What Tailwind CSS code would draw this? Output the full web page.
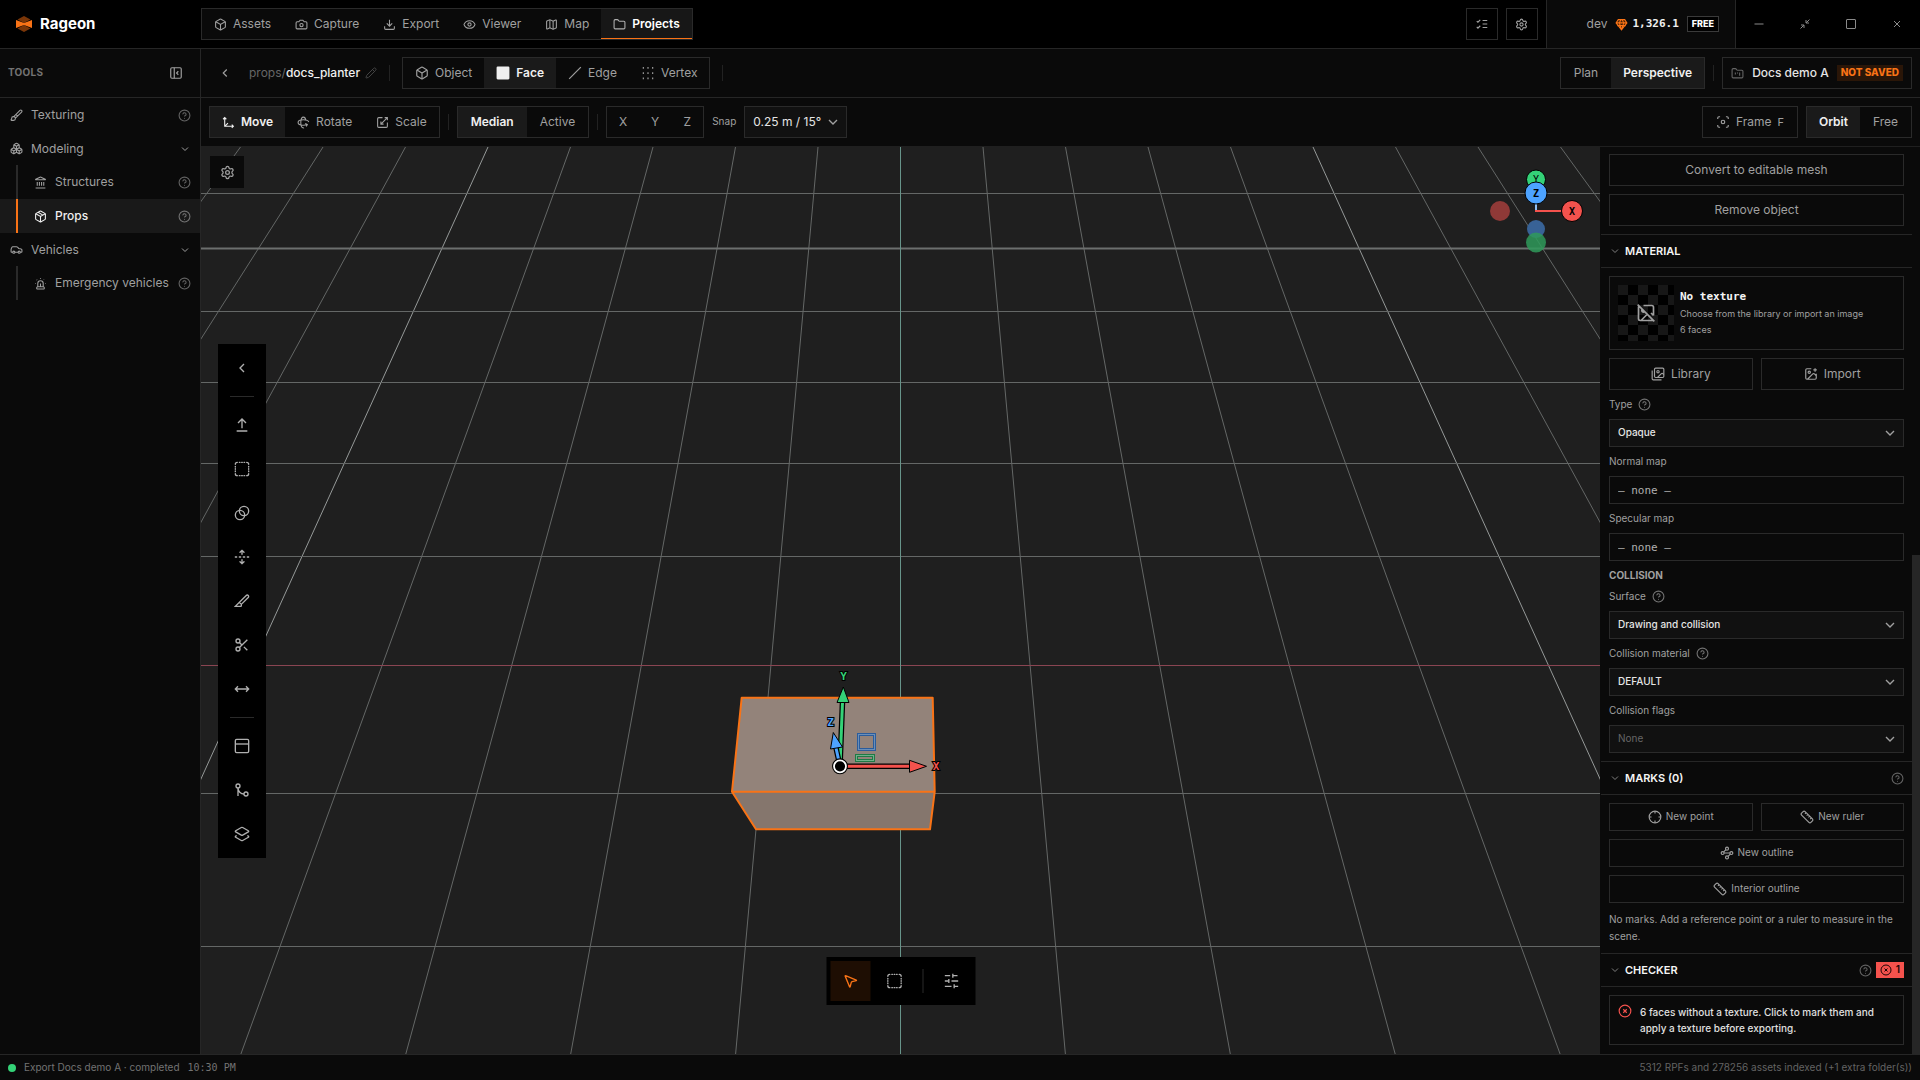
<!DOCTYPE html>
<html lang="en">
<head>
  <meta charset="UTF-8"/>
  <meta name="viewport" content="width=device-width, initial-scale=1"/>
  <title>Rageon — docs_planter</title>
  <script src="https://cdn.jsdelivr.net/npm/@tailwindcss/browser@4"></script>
</head>
<body class="h-screen flex flex-col overflow-hidden bg-[#0a0a0a] font-['Inter','Liberation_Sans',sans-serif] text-xs text-[#a0a0a0]">

  <!-- Icon sprite -->
  <svg class="hidden" aria-hidden="true">
    <symbol id="i-box" viewBox="0 0 24 24"><path d="M21 8a2 2 0 0 0-1-1.73l-7-4a2 2 0 0 0-2 0l-7 4A2 2 0 0 0 3 8v8a2 2 0 0 0 1 1.73l7 4a2 2 0 0 0 2 0l7-4A2 2 0 0 0 21 16Z"/><path d="m3.3 7 8.7 5 8.7-5M12 22V12"/></symbol>
    <symbol id="i-package" viewBox="0 0 24 24"><path d="M21 8a2 2 0 0 0-1-1.73l-7-4a2 2 0 0 0-2 0l-7 4A2 2 0 0 0 3 8v8a2 2 0 0 0 1 1.73l7 4a2 2 0 0 0 2 0l7-4A2 2 0 0 0 21 16Z"/><path d="m3.3 7 8.7 5 8.7-5M12 22V12M7.5 4.27l9 5.15"/></symbol>
    <symbol id="i-camera" viewBox="0 0 24 24"><path d="M14.5 4h-5L7 7H4a2 2 0 0 0-2 2v9a2 2 0 0 0 2 2h16a2 2 0 0 0 2-2V9a2 2 0 0 0-2-2h-3z"/><circle cx="12" cy="13" r="3"/></symbol>
    <symbol id="i-download" viewBox="0 0 24 24"><path d="M12 15V3M21 15v4a2 2 0 0 1-2 2H5a2 2 0 0 1-2-2v-4M7 10l5 5 5-5"/></symbol>
    <symbol id="i-eye" viewBox="0 0 24 24"><path d="M2.062 12.348a1 1 0 0 1 0-.696 10.75 10.75 0 0 1 19.876 0 1 1 0 0 1 0 .696 10.75 10.75 0 0 1-19.876 0"/><circle cx="12" cy="12" r="3"/></symbol>
    <symbol id="i-map" viewBox="0 0 24 24"><path d="M14.106 5.553a2 2 0 0 0 1.788 0l3.659-1.83A1 1 0 0 1 21 4.619v12.764a1 1 0 0 1-.553.894l-4.553 2.277a2 2 0 0 1-1.788 0l-4.212-2.106a2 2 0 0 0-1.788 0l-3.659 1.83A1 1 0 0 1 3 19.381V6.618a1 1 0 0 1 .553-.894l4.553-2.277a2 2 0 0 1 1.788 0zM15 5.764v15M9 3.236v15"/></symbol>
    <symbol id="i-folder" viewBox="0 0 24 24"><path d="M20 20a2 2 0 0 0 2-2V8a2 2 0 0 0-2-2h-7.9a2 2 0 0 1-1.69-.9L9.6 3.9A2 2 0 0 0 7.93 3H4a2 2 0 0 0-2 2v13a2 2 0 0 0 2 2Z"/></symbol>
    <symbol id="i-kanban" viewBox="0 0 24 24"><path d="M4 20h16a2 2 0 0 0 2-2V8a2 2 0 0 0-2-2h-7.93a2 2 0 0 1-1.66-.9l-.82-1.2A2 2 0 0 0 7.93 3H4a2 2 0 0 0-2 2v13c0 1.1.9 2 2 2ZM8 10v4M12 10v2M16 10v6"/></symbol>
    <symbol id="i-checks" viewBox="0 0 24 24"><path d="m3 17 2 2 4-4M3 7l2 2 4-4M13 6h8M13 12h8M13 18h8"/></symbol>
    <symbol id="i-settings" viewBox="0 0 24 24"><path d="M9.671 4.136a2.34 2.34 0 0 1 4.659 0 2.34 2.34 0 0 0 3.319 1.915 2.34 2.34 0 0 1 2.33 4.033 2.34 2.34 0 0 0 0 3.831 2.34 2.34 0 0 1-2.33 4.033 2.34 2.34 0 0 0-3.319 1.915 2.34 2.34 0 0 1-4.659 0 2.34 2.34 0 0 0-3.32-1.915 2.34 2.34 0 0 1-2.33-4.033 2.34 2.34 0 0 0 0-3.831A2.34 2.34 0 0 1 6.35 6.051a2.34 2.34 0 0 0 3.319-1.915"/><circle cx="12" cy="12" r="3"/></symbol>
    <symbol id="i-minus" viewBox="0 0 24 24"><path d="M3 12h18"/></symbol>
    <symbol id="i-shrink" viewBox="0 0 24 24"><path d="m14 10 7-7M20 10h-6V4M3 21l7-7M4 14h6v6"/></symbol>
    <symbol id="i-square" viewBox="0 0 24 24"><rect x="3" y="3" width="18" height="18" rx="1"/></symbol>
    <symbol id="i-x" viewBox="0 0 24 24"><path d="M18 6 6 18M6 6l12 12"/></symbol>
    <symbol id="i-panel-close" viewBox="0 0 24 24"><rect x="3" y="3" width="18" height="18" rx="2"/><path d="M9 3v18M16 15l-3-3 3-3"/></symbol>
    <symbol id="i-left" viewBox="0 0 24 24"><path d="m15 18-6-6 6-6"/></symbol>
    <symbol id="i-down" viewBox="0 0 24 24"><path d="m6 9 6 6 6-6"/></symbol>
    <symbol id="i-pencil" viewBox="0 0 24 24"><path d="M21.174 6.812a1 1 0 0 0-3.986-3.987L3.842 16.174a2 2 0 0 0-.5.83l-1.321 4.352a.5.5 0 0 0 .623.622l4.353-1.32a2 2 0 0 0 .83-.497zM15 5l4 4"/></symbol>
    <symbol id="i-face" viewBox="0 0 24 24"><rect x="1" y="1" width="22" height="22" rx="2" fill="currentColor" stroke="none"/></symbol>
    <symbol id="i-edge" viewBox="0 0 24 24"><path d="M22 2 2 22"/></symbol>
    <symbol id="i-dots" viewBox="0 0 24 24"><path d="M3 3h2M11 3h2M19 3h2M3 12h2M11 12h2M19 12h2M3 21h2M11 21h2M19 21h2" stroke-width="3"/></symbol>
    <symbol id="i-move3d" viewBox="0 0 24 24"><path d="M5 3v16h16M5 19l6-6M2 6l3-3 3 3M18 16l3 3-3 3"/></symbol>
    <symbol id="i-rotate3d" viewBox="0 0 24 24"><path d="M16.466 7.5C15.643 4.237 13.952 2 12 2 9.239 2 7 6.477 7 12s2.239 10 5 10c.342 0 .677-.069 1-.2M15.194 13.707l3.814 1.86-1.86 3.814M19 15.57c-1.804.885-4.274 1.43-7 1.43-5.523 0-10-2.239-10-5s4.477-5 10-5c4.838 0 8.873 1.718 9.8 4"/></symbol>
    <symbol id="i-scaling" viewBox="0 0 24 24"><path d="M12 3H5a2 2 0 0 0-2 2v14a2 2 0 0 0 2 2h14a2 2 0 0 0 2-2v-7M14 15H9v-5M16 3h5v5M21 3 9 15"/></symbol>
    <symbol id="i-focus" viewBox="0 0 24 24"><circle cx="12" cy="12" r="3"/><path d="M3 7V5a2 2 0 0 1 2-2h2M17 3h2a2 2 0 0 1 2 2v2M21 17v2a2 2 0 0 1-2 2h-2M7 21H5a2 2 0 0 1-2-2v-2"/></symbol>
    <symbol id="i-brush" viewBox="0 0 24 24"><path d="m11 10 3 3M6.5 21A3.5 3.5 0 1 0 3 17.5a2.62 2.62 0 0 1-.708 1.792A1 1 0 0 0 3 21zM9.969 17.031 21.378 5.624a1 1 0 0 0-3.002-3.002L6.967 14.031"/></symbol>
    <symbol id="i-boxes" viewBox="0 0 24 24"><path d="M2.97 12.92A2 2 0 0 0 2 14.63v3.24a2 2 0 0 0 .97 1.71l3 1.8a2 2 0 0 0 2.06 0L12 19v-5.5l-5-3-4.03 2.42ZM7 16.5l-4.74-2.85M7 16.5l5-3M7 16.5v5.17M12 13.5V19l3.97 2.38a2 2 0 0 0 2.06 0l3-1.8a2 2 0 0 0 .97-1.71v-3.24a2 2 0 0 0-.97-1.71L17 10.5l-5 3ZM17 16.5l-5-3M17 16.5l4.74-2.85M17 16.5v5.17M7.97 4.42A2 2 0 0 0 7 6.13v4.37l5 3 5-3V6.13a2 2 0 0 0-.97-1.71l-3-1.8a2 2 0 0 0-2.06 0l-3 1.8ZM12 8 7.26 5.15M12 8l4.74-2.85M12 13.5V8"/></symbol>
    <symbol id="i-landmark" viewBox="0 0 24 24"><path d="M10 18v-7M11.12 2.198a2 2 0 0 1 1.76.006l7.866 3.847c.476.233.31.949-.22.949H3.474c-.53 0-.695-.716-.22-.949zM14 18v-7M18 18v-7M3 22h18M6 18v-7"/></symbol>
    <symbol id="i-car" viewBox="0 0 24 24"><path d="M19 17h2c.6 0 1-.4 1-1v-3c0-.9-.7-1.7-1.5-1.9C18.7 10.6 16 10 16 10s-1.3-1.4-2.2-2.3c-.5-.4-1.1-.7-1.8-.7H5c-.6 0-1.1.4-1.4.9l-1.4 2.9A3.7 3.7 0 0 0 2 12v4c0 .6.4 1 1 1h2M9 17h6"/><circle cx="7" cy="17" r="2"/><circle cx="17" cy="17" r="2"/></symbol>
    <symbol id="i-siren" viewBox="0 0 24 24"><path d="M7 18v-6a5 5 0 1 1 10 0v6M5 21a1 1 0 0 0 1 1h12a1 1 0 0 0 1-1v-1a2 2 0 0 0-2-2H7a2 2 0 0 0-2 2zM21 12h1M18.5 4.5 18 5M2 12h1M12 2v1M4.929 4.929l.707.707M12 12v6"/></symbol>
    <symbol id="i-help" viewBox="0 0 24 24"><circle cx="12" cy="12" r="10"/><path d="M9.09 9a3 3 0 0 1 5.83 1c0 2-3 3-3 3M12 17h.01" stroke-linecap="round"/></symbol>
    <symbol id="i-extrude" viewBox="0 0 24 24"><path d="m18 9-6-6-6 6M12 3v14M4 21h16"/></symbol>
    <symbol id="i-select" viewBox="0 0 24 24"><path d="M5 2a3 3 0 0 0-3 3M19 2a3 3 0 0 1 3 3M22 19a3 3 0 0 1-3 3M5 22a3 3 0 0 1-3-3M8 2h1M8 22h1M11.5 2h1M11.5 22h1M15 2h1M15 22h1M2 8v1M22 8v1M2 11.5v1M22 11.5v1M2 15v1M22 15v1" stroke-linecap="round"/></symbol>
    <symbol id="i-blend" viewBox="0 0 24 24"><circle cx="9" cy="15" r="7"/><circle cx="15" cy="9" r="7"/></symbol>
    <symbol id="i-unfold" viewBox="0 0 24 24"><path d="M12 22v-6M12 8V2M4 12H2M10 12H8M16 12h-2M22 12h-2M15 19l-3 3-3-3M15 5l-3-3-3 3" stroke-linecap="round"/></symbol>
    <symbol id="i-slice" viewBox="0 0 24 24"><path d="M11 16.586V19a1 1 0 0 1-1 1H2L18.37 3.63a1 1 0 1 1 3 3l-9.663 9.663a1 1 0 0 1-1.414 0L8 14"/></symbol>
    <symbol id="i-scissors" viewBox="0 0 24 24"><circle cx="6" cy="6" r="3"/><path d="M8.12 8.12 12 12M20 4 8.12 15.88M14.8 14.8 20 20"/><circle cx="6" cy="18" r="3"/></symbol>
    <symbol id="i-horizontal" viewBox="0 0 24 24"><path d="m18 8 4 4-4 4M2 12h20M6 8l-4 4 4 4"/></symbol>
    <symbol id="i-panel-top" viewBox="0 0 24 24"><rect x="2" y="2" width="20" height="20" rx="2"/><path d="M2 9h20"/></symbol>
    <symbol id="i-merge" viewBox="0 0 24 24"><circle cx="18" cy="18" r="3"/><circle cx="6" cy="6" r="3"/><path d="M6 21V9a9 9 0 0 0 9 9"/></symbol>
    <symbol id="i-layers" viewBox="0 0 24 24"><path d="M13 13.74a2 2 0 0 1-2 0L2.5 8.87a1 1 0 0 1 0-1.74L11 2.26a2 2 0 0 1 2 0l8.5 4.87a1 1 0 0 1 0 1.74zM20 14.285l1.5.845a1 1 0 0 1 0 1.74L13 21.74a2 2 0 0 1-2 0l-8.5-4.87a1 1 0 0 1 0-1.74l1.5-.845"/></symbol>
    <symbol id="i-pointer" viewBox="0 0 24 24"><path d="M4.037 4.688a.495.495 0 0 1 .651-.651l16 6.5a.5.5 0 0 1-.063.947l-6.124 1.58a2 2 0 0 0-1.438 1.435l-1.579 6.126a.5.5 0 0 1-.947.063z"/></symbol>
    <symbol id="i-sliders" viewBox="0 0 24 24"><path d="M21 4h-7M10 4H2M22 12h-10M8 12H2M22 20h-6M12 20H2M14 1v6M8 9v6M16 17v6"/></symbol>
    <symbol id="i-image-off" viewBox="0 0 24 24"><path d="m2 2 20 20M10.41 10.41a2 2 0 1 1-2.83-2.83M13.5 13.5 6 21M18 12l3 3M3.59 3.59A1.99 1.99 0 0 0 3 5v14a2 2 0 0 0 2 2h14c.55 0 1.052-.22 1.41-.59M21 15V5a2 2 0 0 0-2-2H9"/></symbol>
    <symbol id="i-images" viewBox="0 0 24 24"><path d="M18 22H4a2 2 0 0 1-2-2V6M22 13l-1.296-1.296a2.41 2.41 0 0 0-3.408 0L11 18"/><circle cx="12" cy="8" r="2"/><rect x="6" y="2" width="16" height="16" rx="2"/></symbol>
    <symbol id="i-image-plus" viewBox="0 0 24 24"><path d="M16 5h6M19 2v6M21 11.5V19a2 2 0 0 1-2 2H5a2 2 0 0 1-2-2V5a2 2 0 0 1 2-2h7.5M21 15l-3.086-3.086a2 2 0 0 0-2.828 0L6 21"/><circle cx="9" cy="9" r="2"/></symbol>
    <symbol id="i-crosshair" viewBox="0 0 24 24"><circle cx="12" cy="12" r="10"/><path d="M22 12h-4M6 12H2M12 6V2M12 22v-4"/></symbol>
    <symbol id="i-ruler" viewBox="0 0 24 24"><path d="M21.3 15.3a2.4 2.4 0 0 1 0 3.4l-2.6 2.6a2.4 2.4 0 0 1-3.4 0L2.7 8.7a2.41 2.41 0 0 1 0-3.4l2.6-2.6a2.41 2.41 0 0 1 3.4 0ZM14.5 12.5l2-2M11.5 9.5l2-2M8.5 6.5l2-2M17.5 15.5l2-2"/></symbol>
    <symbol id="i-waypoints" viewBox="0 0 24 24"><circle cx="12" cy="4.5" r="2.5"/><path d="m10.2 6.3-3.9 3.9M7 12h10M13.8 17.7l3.9-3.9"/><circle cx="4.5" cy="12" r="2.5"/><circle cx="19.5" cy="12" r="2.5"/><circle cx="12" cy="19.5" r="2.5"/></symbol>
    <symbol id="i-circle-x" viewBox="0 0 24 24"><circle cx="12" cy="12" r="10"/><path d="m15 9-6 6M9 9l6 6"/></symbol>
  </svg>

  <!-- Header -->
  <header class="flex h-[49px] shrink-0 border-b border-[#262626] bg-black">
    <div class="flex w-[201px] shrink-0 items-center gap-2 pl-4">
      <svg class="size-4" viewBox="0 0 16 16" aria-hidden="true">
        <path d="M8 0l6.500 3.500L8 7 1.500 3.500zM8 9l6.500 3.500L8 16l-6.500-3.500z" fill="#7a3608"/>
        <path d="M0 4l8 3 8-3v8l-8-3-8 3z" fill="#f97316"/>
      </svg>
      <span class="text-[15px] font-bold text-white">Rageon</span>
    </div>
    <nav class="mt-2 flex h-8 border border-[#2a2a2a] bg-[#0a0a0a] [&_a]:flex [&_a]:items-center [&_a]:gap-[6px] [&_a]:px-3 [&_svg]:size-[13px]">
      <a href="#"><svg fill="none" stroke="currentColor" stroke-width="2"><use href="#i-box"/></svg>Assets</a>
      <a href="#"><svg fill="none" stroke="currentColor" stroke-width="2"><use href="#i-camera"/></svg>Capture</a>
      <a href="#"><svg fill="none" stroke="currentColor" stroke-width="2"><use href="#i-download"/></svg>Export</a>
      <a href="#"><svg fill="none" stroke="currentColor" stroke-width="2"><use href="#i-eye"/></svg>Viewer</a>
      <a href="#"><svg fill="none" stroke="currentColor" stroke-width="2"><use href="#i-map"/></svg>Map</a>
      <a href="#" aria-current="page" class="bg-[#171717] font-semibold text-white shadow-[inset_0_-1px_0_#f97316]"><svg class="text-[#b0b0b0]" fill="none" stroke="currentColor" stroke-width="2"><use href="#i-folder"/></svg>Projects</a>
    </nav>
    <div class="ml-auto flex gap-2 pr-2 pt-2">
      <button aria-label="Tasks" class="flex size-8 items-center justify-center border border-[#2a2a2a]"><svg class="size-[14px]" fill="none" stroke="currentColor" stroke-width="2"><use href="#i-checks"/></svg></button>
      <button aria-label="Settings" class="flex size-8 items-center justify-center border border-[#2a2a2a]"><svg class="size-[13px]" fill="none" stroke="currentColor" stroke-width="2"><use href="#i-settings"/></svg></button>
    </div>
    <div class="flex items-center border-x border-[#262626] bg-[#0a0a0a] pl-10 pr-4">
      <span class="pr-2">dev</span>
      <svg class="size-[13px]" viewBox="0 0 24 24" fill="#4a2306" stroke="#f97316" stroke-width="2" aria-hidden="true"><path d="M6 3h12l4 6-10 13L2 9zM2 9h20M12 22 8 9l3-6M12 22l4-13-3-6M4 14h16"/></svg>
      <span class="pl-1 pr-2 font-['DejaVu_Sans_Mono',monospace] text-[11px] font-bold text-[#f0f0f0]">1,326.1</span>
      <span class="flex h-4 items-center border border-[#3a3a3a] bg-black px-1 text-[9px] font-extrabold text-white">FREE</span>
    </div>
    <div class="flex items-center text-[#8a8a8a] [&_button]:flex [&_button]:h-12 [&_button]:w-[46px] [&_button]:items-center [&_button]:justify-center [&_svg]:size-3">
      <button aria-label="Minimize"><svg fill="none" stroke="currentColor" stroke-width="2"><use href="#i-minus"/></svg></button>
      <button aria-label="Compact"><svg fill="none" stroke="currentColor" stroke-width="2"><use href="#i-shrink"/></svg></button>
      <button aria-label="Maximize"><svg fill="none" stroke="currentColor" stroke-width="2"><use href="#i-square"/></svg></button>
      <button aria-label="Close"><svg fill="none" stroke="currentColor" stroke-width="2"><use href="#i-x"/></svg></button>
    </div>
  </header>

  <div class="flex min-h-0 flex-1">

    <!-- Sidebar -->
    <aside class="w-[201px] shrink-0 border-r border-[#262626]">
      <div class="flex h-[49px] items-center justify-between border-b border-[#262626] pl-2 pr-[17px]">
        <h2 class="text-[10px] font-bold tracking-wide text-[#737373]">TOOLS</h2>
        <button aria-label="Collapse tools"><svg class="size-[14px]" fill="none" stroke="currentColor" stroke-width="2"><use href="#i-panel-close"/></svg></button>
      </div>
      <nav class="[&_a]:flex [&_a]:items-center [&_a]:gap-2 [&_a]:pr-[9px]">
        <a href="#" class="h-[34px] pl-[10px]"><svg class="size-[13px]" fill="none" stroke="currentColor" stroke-width="2"><use href="#i-brush"/></svg>Texturing<svg class="ml-auto size-[13px] text-[#636363]" fill="none" stroke="currentColor" stroke-width="2"><use href="#i-help"/></svg></a>
        <a href="#" class="h-[33px] pl-[10px]"><svg class="size-[13px]" fill="none" stroke="currentColor" stroke-width="2"><use href="#i-boxes"/></svg>Modeling<svg class="ml-auto size-3" fill="none" stroke="currentColor" stroke-width="2"><use href="#i-down"/></svg></a>
        <div class="pl-4">
          <a href="#" class="h-[34px] border-l-2 border-[#2a2a2a] pl-4"><svg class="size-[13px]" fill="none" stroke="currentColor" stroke-width="2"><use href="#i-landmark"/></svg>Structures<svg class="ml-auto size-[13px] text-[#636363]" fill="none" stroke="currentColor" stroke-width="2"><use href="#i-help"/></svg></a>
        </div>
        <div class="bg-[#191919] pl-4">
          <a href="#" aria-current="page" class="h-[34px] border-l-2 border-[#f97316] pl-4 font-medium text-[#f0f0f0]"><svg class="size-[13px]" fill="none" stroke="currentColor" stroke-width="2"><use href="#i-package"/></svg>Props<svg class="ml-auto size-[13px] text-[#737373]" fill="none" stroke="currentColor" stroke-width="2"><use href="#i-help"/></svg></a>
        </div>
        <a href="#" class="h-[33px] pl-[10px]"><svg class="size-[13px]" fill="none" stroke="currentColor" stroke-width="2"><use href="#i-car"/></svg>Vehicles<svg class="ml-auto size-3" fill="none" stroke="currentColor" stroke-width="2"><use href="#i-down"/></svg></a>
        <div class="pl-4">
          <a href="#" class="h-[34px] border-l-2 border-[#2a2a2a] pl-4"><svg class="size-[13px]" fill="none" stroke="currentColor" stroke-width="2"><use href="#i-siren"/></svg>Emergency vehicles<svg class="ml-auto size-[13px] text-[#636363]" fill="none" stroke="currentColor" stroke-width="2"><use href="#i-help"/></svg></a>
        </div>
      </nav>
    </aside>

    <div class="flex min-w-0 flex-1 flex-col">

      <!-- Document bar -->
      <div class="flex h-[49px] shrink-0 items-center gap-2 border-b border-[#262626] px-2">
        <button aria-label="Back" class="flex size-8 items-center justify-center"><svg class="size-[14px]" fill="none" stroke="currentColor" stroke-width="2"><use href="#i-left"/></svg></button>
        <div class="flex items-center gap-[5px]">
          <span class="text-[#666]">props/<span class="font-medium text-[#f0f0f0]">docs_planter</span></span>
          <button aria-label="Rename" class="text-[#444]"><svg class="size-3" fill="none" stroke="currentColor" stroke-width="2"><use href="#i-pencil"/></svg></button>
        </div>
        <span class="mx-1 h-4 w-px bg-[#222]"></span>
        <div class="flex h-8 border border-[#2a2a2a] [&_button]:flex [&_button]:items-center [&_button]:gap-[6px] [&_button]:px-3 [&_svg]:size-[14px]">
          <button><svg fill="none" stroke="currentColor" stroke-width="2"><use href="#i-box"/></svg>Object</button>
          <button class="bg-[#1a1a1a] font-semibold text-[#f0f0f0]"><svg fill="none" stroke="currentColor" stroke-width="2"><use href="#i-face"/></svg>Face</button>
          <button><svg fill="none" stroke="currentColor" stroke-width="2"><use href="#i-edge"/></svg>Edge</button>
          <button><svg fill="none" stroke="currentColor" stroke-width="2"><use href="#i-dots"/></svg>Vertex</button>
        </div>
        <span class="mx-1 h-4 w-px bg-[#222]"></span>
        <div class="ml-auto flex h-8 border border-[#2a2a2a]">
          <button class="px-[13px]">Plan</button>
          <button class="bg-[#1a1a1a] px-3 font-semibold text-[#f0f0f0]">Perspective</button>
        </div>
        <span class="h-4 w-px bg-[#222]"></span>
        <button class="flex h-8 items-center gap-2 border border-[#2a2a2a] px-2 font-medium text-[#e5e5e5]">
          <svg class="size-[13px] text-[#666]" fill="none" stroke="currentColor" stroke-width="2"><use href="#i-kanban"/></svg>Docs demo A
          <span class="flex h-4 items-center bg-[#2a1608] px-1 text-[10px] font-extrabold text-[#f97316]">NOT SAVED</span>
        </button>
      </div>

      <!-- Transform bar -->
      <div class="flex h-[49px] shrink-0 items-center gap-2 border-b border-[#1f1f1f] px-2">
        <div class="flex h-8 border border-[#2a2a2a] [&_button]:flex [&_button]:items-center [&_button]:gap-[6px] [&_button]:px-3 [&_svg]:size-[13px]">
          <button class="bg-[#1a1a1a] font-semibold text-[#f0f0f0]"><svg fill="none" stroke="currentColor" stroke-width="2"><use href="#i-move3d"/></svg>Move</button>
          <button><svg fill="none" stroke="currentColor" stroke-width="2"><use href="#i-rotate3d"/></svg>Rotate</button>
          <button><svg fill="none" stroke="currentColor" stroke-width="2"><use href="#i-scaling"/></svg>Scale</button>
        </div>
        <span class="h-4 w-px bg-[#222]"></span>
        <div class="flex h-8 border border-[#2a2a2a]">
          <button class="bg-[#1a1a1a] px-[13px] font-semibold text-[#f0f0f0]">Median</button>
          <button class="px-[13px]">Active</button>
        </div>
        <span class="h-4 w-px bg-[#222]"></span>
        <div class="flex h-8 border border-[#2a2a2a] [&_button]:w-[32px]">
          <button>X</button>
          <button>Y</button>
          <button>Z</button>
        </div>
        <label for="snap" class="text-[10px]">Snap</label>
        <div class="relative">
          <select id="snap" class="h-8 w-[103px] appearance-none border border-[#2a2a2a] bg-[#111] px-2 text-[#e5e5e5]"><option>0.25 m / 15°</option></select>
          <svg class="pointer-events-none absolute right-[6px] top-2 size-4" fill="none" stroke="currentColor" stroke-width="2"><use href="#i-down"/></svg>
        </div>
        <button class="ml-auto flex h-8 items-center gap-[6px] border border-[#2a2a2a] px-[13px]">
          <svg class="size-[14px]" fill="none" stroke="currentColor" stroke-width="2"><use href="#i-focus"/></svg>Frame<kbd class="font-['Inter',sans-serif] text-[11px]">F</kbd>
        </button>
        <div class="flex h-8 border border-[#2a2a2a]">
          <button class="bg-[#1a1a1a] px-3 font-semibold text-[#f0f0f0]">Orbit</button>
          <button class="px-[13px]">Free</button>
        </div>
      </div>

      <div class="flex min-h-0 flex-1">

        <!-- 3D viewport -->
        <main class="relative min-w-0 flex-1 overflow-hidden bg-[#1f1f1f]">
          <svg id="scene" class="absolute inset-0 h-full w-full" viewBox="201 147 1399 907" preserveAspectRatio="xMidYMid slice">
            <g id="grid" fill="none"></g>
            <path d="M741.700 697.700H932.700L934.700 791.700H732Z" fill="#93837a"/>
            <path d="M732 791.700H934.700L930 829.300H756Z" fill="#85766d"/>
            <path d="M741.700 697.700H932.700L934.700 791.700 930 829.300H756L732 791.700ZM732 791.700H934.700" fill="none" stroke="#f97316" stroke-width="2" stroke-linejoin="round"/>
            <!-- plane handles -->
            <g fill="none">
              <rect x="858.500" y="734.500" width="16" height="15" stroke="#2a5c9c" stroke-width="3"/>
              <rect x="858.500" y="734.500" width="16" height="15" stroke="#6b8fb8"/>
              <rect x="856.500" y="755.500" width="17" height="5" stroke="#1f7a45" stroke-width="3"/>
              <rect x="856.500" y="755.500" width="17" height="5" stroke="#6fb08a"/>
            </g>
            <!-- move handles -->
            <path d="M840 766 842.500 702" stroke="#000" stroke-width="5.500"/>
            <path d="M840 766 842.500 702" stroke="#34d277" stroke-width="3"/>
            <path d="M843.300 687 849 702.500H837Z" fill="#34d277" stroke="#000"/>
            <path d="M840 766 836 748" stroke="#000" stroke-width="5.500"/>
            <path d="M840 766 836 748" stroke="#4da3ff" stroke-width="3"/>
            <path d="M833.300 732.500 842.500 747 830.500 749Z" fill="#4da3ff" stroke="#000"/>
            <path d="M840 766.300H910" stroke="#000" stroke-width="5.500"/>
            <path d="M840 766.300H910" stroke="#f4524d" stroke-width="3"/>
            <path d="M926.500 766.300 909.500 760.300V772.300Z" fill="#f4524d" stroke="#000"/>
            <circle cx="840" cy="766.300" r="6.500" fill="#000" stroke="#000" stroke-width="3"/>
            <circle cx="840" cy="766.300" r="6" fill="#000" stroke="#fff" stroke-width="1.800"/>
            <g class="font-['DejaVu_Sans_Mono',monospace] text-[11px] font-bold" text-anchor="middle" stroke="#000" stroke-width="2" paint-order="stroke">
              <text x="843.500" y="680" fill="#34d277">Y</text>
              <text x="830.500" y="726" fill="#4da3ff">Z</text>
              <text x="936" y="770" fill="#f4524d">X</text>
            </g>
            <!-- orientation gizmo -->
            <circle cx="1500" cy="211" r="10" fill="#8f3937"/>
            <circle cx="1536" cy="229" r="9" fill="#386296"/>
            <circle cx="1536" cy="242.500" r="10" fill="#2f9a5b" fill-opacity=".85"/>
            <path d="M1536 211V200" stroke="#8fc0f5" stroke-width="2"/>
            <path d="M1535 211H1562" stroke="#f4524d" stroke-width="2"/>
            <g stroke="#000">
              <circle cx="1536" cy="179.500" r="9.500" fill="#34d277"/>
              <text x="1536" y="182.500" class="font-['DejaVu_Sans_Mono',monospace] text-[10px]" text-anchor="middle" stroke="none" fill="#000">Y</text>
              <circle cx="1536" cy="193" r="11" fill="#4da3ff"/>
              <circle cx="1572" cy="211" r="10.500" fill="#f4524d"/>
            </g>
            <g class="font-['DejaVu_Sans_Mono',monospace] text-[10px] font-bold" text-anchor="middle" fill="#000">
              <text x="1536" y="196.500">Z</text>
              <text x="1572" y="214.500">X</text>
            </g>
          </svg>

          <button aria-label="Viewport settings" class="absolute left-[9px] top-[9px] flex h-8 w-[34px] items-center justify-center bg-[#0a0a0a]"><svg class="size-[15px]" fill="none" stroke="currentColor" stroke-width="2"><use href="#i-settings"/></svg></button>

          <!-- Mesh tools -->
          <div class="absolute left-[17px] top-1/2 flex -translate-y-1/2 flex-col items-center gap-1 bg-black p-1 text-[#b0b0b0] [&_button]:flex [&_button]:size-10 [&_button]:items-center [&_button]:justify-center [&_svg]:size-4">
            <button aria-label="Collapse"><svg fill="none" stroke="currentColor" stroke-width="2"><use href="#i-left"/></svg></button>
            <span class="my-1 h-px w-6 bg-[#2a2a2a]"></span>
            <button aria-label="Extrude"><svg fill="none" stroke="currentColor" stroke-width="2"><use href="#i-extrude"/></svg></button>
            <button aria-label="Inset"><svg fill="none" stroke="currentColor" stroke-width="2"><use href="#i-select"/></svg></button>
            <button aria-label="Boolean"><svg fill="none" stroke="currentColor" stroke-width="2"><use href="#i-blend"/></svg></button>
            <button aria-label="Split"><svg fill="none" stroke="currentColor" stroke-width="2"><use href="#i-unfold"/></svg></button>
            <button aria-label="Knife"><svg fill="none" stroke="currentColor" stroke-width="2"><use href="#i-slice"/></svg></button>
            <button aria-label="Cut"><svg fill="none" stroke="currentColor" stroke-width="2"><use href="#i-scissors"/></svg></button>
            <button aria-label="Slide"><svg fill="none" stroke="currentColor" stroke-width="2"><use href="#i-horizontal"/></svg></button>
            <span class="my-1 h-px w-6 bg-[#2a2a2a]"></span>
            <button aria-label="Panel"><svg fill="none" stroke="currentColor" stroke-width="2"><use href="#i-panel-top"/></svg></button>
            <button aria-label="Merge"><svg fill="none" stroke="currentColor" stroke-width="2"><use href="#i-merge"/></svg></button>
            <button aria-label="Layers"><svg fill="none" stroke="currentColor" stroke-width="2"><use href="#i-layers"/></svg></button>
          </div>

          <!-- Selection tools -->
          <div class="absolute bottom-[49px] left-1/2 flex -translate-x-1/2 items-center gap-1 bg-black p-1 text-[#b0b0b0] [&_button]:flex [&_button]:size-10 [&_button]:items-center [&_button]:justify-center [&_svg]:size-4">
            <button aria-label="Select" class="bg-[#1e0e03] text-[#f97316]"><svg fill="none" stroke="currentColor" stroke-width="2"><use href="#i-pointer"/></svg></button>
            <button aria-label="Box select"><svg fill="none" stroke="currentColor" stroke-width="2"><use href="#i-select"/></svg></button>
            <span class="mx-1 h-6 w-px bg-[#2a2a2a]"></span>
            <button aria-label="Options"><svg fill="none" stroke="currentColor" stroke-width="2"><use href="#i-sliders"/></svg></button>
          </div>
        </main>

        <!-- Properties -->
        <aside class="flex w-80 shrink-0 border-l border-[#0a0a0a]">
          <div class="min-w-0 flex-1">
            <div class="flex flex-col gap-2 px-2 pb-2 pt-[7px]">
              <button class="h-8 border border-[#2a2a2a]">Convert to editable mesh</button>
              <button class="h-8 border border-[#2a2a2a]">Remove object</button>
            </div>

            <h3 class="flex h-[34px] items-center gap-1 border-y border-[#262626] px-2 text-[11px] font-semibold text-[#f5f5f5]"><svg class="size-3 text-[#808080]" fill="none" stroke="currentColor" stroke-width="2"><use href="#i-down"/></svg>MATERIAL</h3>
            <div class="flex flex-col gap-[6px] px-2 pb-2 pt-2 text-[10px]">
              <div class="mb-[2px] flex h-[74px] items-center gap-[6px] border border-[#2a2a2a] px-2">
                <div class="flex size-14 shrink-0 items-center justify-center bg-[conic-gradient(#000_25%,#171717_0_50%,#000_0_75%,#171717_0)] bg-[length:20px_20px] text-[#a0a0a0]"><svg class="size-5" fill="none" stroke="currentColor" stroke-width="2"><use href="#i-image-off"/></svg></div>
                <div class="text-[9px] leading-4">
                  <p class="font-['DejaVu_Sans_Mono',monospace] text-[11px] leading-[18px] font-bold text-[#f5f5f5]">No texture</p>
                  <p>Choose from the library or import an image</p>
                  <p>6 faces</p>
                </div>
              </div>
              <div class="grid grid-cols-2 gap-2 text-xs [&_button]:flex [&_button]:h-8 [&_button]:items-center [&_button]:justify-center [&_button]:gap-[6px] [&_button]:border [&_button]:border-[#2a2a2a]">
                <button><svg class="size-[14px]" fill="none" stroke="currentColor" stroke-width="2"><use href="#i-images"/></svg>Library</button>
                <button><svg class="size-[14px]" fill="none" stroke="currentColor" stroke-width="2"><use href="#i-image-plus"/></svg>Import</button>
              </div>
              <label for="type" class="flex h-[17px] items-center gap-[6px]">Type<svg class="size-[13px] text-[#737373]" fill="none" stroke="currentColor" stroke-width="2"><use href="#i-help"/></svg></label>
              <div class="relative">
                <select id="type" class="h-7 w-full appearance-none border border-[#2a2a2a] bg-[#111] px-2 font-medium text-[#e5e5e5]"><option>Opaque</option></select>
                <svg class="pointer-events-none absolute right-[6px] top-[6px] size-4" fill="none" stroke="currentColor" stroke-width="2"><use href="#i-down"/></svg>
              </div>
              <label for="normal" class="h-[17px] leading-[17px]">Normal map</label>
              <input id="normal" type="text" value="— none —" class="h-7 border border-[#2a2a2a] px-2 font-['DejaVu_Sans_Mono',monospace] text-[11px] text-[#b0b0b0]"/>
              <label for="specular" class="h-[17px] leading-[17px]">Specular map</label>
              <input id="specular" type="text" value="— none —" class="h-7 border border-[#2a2a2a] px-2 font-['DejaVu_Sans_Mono',monospace] text-[11px] text-[#b0b0b0]"/>
              <h4 class="h-[15px] font-bold leading-[17px]">COLLISION</h4>
              <label for="surface" class="flex h-[17px] items-center gap-[6px]">Surface<svg class="size-[13px] text-[#737373]" fill="none" stroke="currentColor" stroke-width="2"><use href="#i-help"/></svg></label>
              <div class="relative">
                <select id="surface" class="h-7 w-full appearance-none border border-[#2a2a2a] bg-[#111] px-2 font-medium text-[#e5e5e5]"><option>Drawing and collision</option></select>
                <svg class="pointer-events-none absolute right-[6px] top-[6px] size-4" fill="none" stroke="currentColor" stroke-width="2"><use href="#i-down"/></svg>
              </div>
              <label for="collision-material" class="flex h-[17px] items-center gap-[6px]">Collision material<svg class="size-[13px] text-[#737373]" fill="none" stroke="currentColor" stroke-width="2"><use href="#i-help"/></svg></label>
              <div class="relative">
                <select id="collision-material" class="h-7 w-full appearance-none border border-[#2a2a2a] bg-[#111] px-2 font-medium text-[#e5e5e5]"><option>DEFAULT</option></select>
                <svg class="pointer-events-none absolute right-[6px] top-[6px] size-4" fill="none" stroke="currentColor" stroke-width="2"><use href="#i-down"/></svg>
              </div>
              <label for="flags" class="h-[17px] leading-[17px]">Collision flags</label>
              <div class="relative">
                <select id="flags" class="h-7 w-full appearance-none border border-[#2a2a2a] bg-[#111] px-2 text-[#666]"><option>None</option></select>
                <svg class="pointer-events-none absolute right-[6px] top-[6px] size-4" fill="none" stroke="currentColor" stroke-width="2"><use href="#i-down"/></svg>
              </div>
            </div>

            <h3 class="flex h-[34px] items-center gap-1 border-y border-[#262626] px-2 text-[11px] font-semibold text-[#f5f5f5]"><svg class="size-3 text-[#808080]" fill="none" stroke="currentColor" stroke-width="2"><use href="#i-down"/></svg>MARKS (0)<svg class="ml-auto size-[13px] text-[#636363]" fill="none" stroke="currentColor" stroke-width="2"><use href="#i-help"/></svg></h3>
            <div class="grid grid-cols-2 gap-2 px-2 py-2 text-[10px] [&_button]:flex [&_button]:h-7 [&_button]:items-center [&_button]:justify-center [&_button]:gap-1 [&_button]:border [&_button]:border-[#2a2a2a] [&_svg]:size-[14px]">
              <button><svg fill="none" stroke="currentColor" stroke-width="2"><use href="#i-crosshair"/></svg>New point</button>
              <button><svg fill="none" stroke="currentColor" stroke-width="2"><use href="#i-ruler"/></svg>New ruler</button>
              <button class="col-span-2"><svg fill="none" stroke="currentColor" stroke-width="2"><use href="#i-waypoints"/></svg>New outline</button>
              <button class="col-span-2"><svg fill="none" stroke="currentColor" stroke-width="2"><use href="#i-ruler"/></svg>Interior outline</button>
              <p class="col-span-2 leading-[17px]">No marks. Add a reference point or a ruler to measure in the scene.</p>
            </div>

            <h3 class="flex h-[34px] items-center gap-1 border-y border-[#262626] px-2 text-[11px] font-semibold text-[#f5f5f5]"><svg class="size-3 text-[#808080]" fill="none" stroke="currentColor" stroke-width="2"><use href="#i-down"/></svg>CHECKER<svg class="ml-auto size-[13px] text-[#636363]" fill="none" stroke="currentColor" stroke-width="2"><use href="#i-help"/></svg><span class="flex h-4 items-center gap-1 bg-[#f4524d] px-1 text-[10px] text-[#1a0505]"><svg class="size-3" fill="none" stroke="currentColor" stroke-width="2"><use href="#i-circle-x"/></svg>1</span></h3>
            <div class="p-2">
              <button class="flex h-[50px] w-full items-start gap-2 border border-[#2a2a2a] px-2 pt-2 text-left text-[10px] font-medium leading-4 text-[#e0e0e0]">
                <svg class="size-[14px] shrink-0 text-[#f4524d]" fill="none" stroke="currentColor" stroke-width="2"><use href="#i-circle-x"/></svg>
                <span>6 faces without a texture. Click to mark them and apply a texture before exporting.</span>
              </button>
            </div>
          </div>
          <!-- scroll track -->
          <div class="flex w-2 flex-col justify-end"><div class="h-[55%] bg-[#262626]"></div></div>
        </aside>
      </div>
    </div>
  </div>

  <!-- Status bar -->
  <footer class="flex h-[26px] shrink-0 items-center border-t border-[#262626] px-2 text-[10px] text-[#737373]">
    <span class="mr-2 size-2 rounded-full bg-[#34d277]"></span>
    <span>Export Docs demo A · completed</span>
    <time class="ml-2 font-['DejaVu_Sans_Mono',monospace]">10:30 PM</time>
    <span class="ml-auto text-[#636363]">5312 RPFs and 278256 assets indexed (+1 extra folder(s))</span>
  </footer>

  <script>
    // Ground grid: columns meet at the vanishing point above the viewport
    const grid = document.getElementById('grid')
    const cx = 900.5

    function addLine(x1, y1, x2, y2, color, width) {
      const line = document.createElementNS('http://www.w3.org/2000/svg', 'line')
      line.setAttribute('x1', x1)
      line.setAttribute('y1', y1)
      line.setAttribute('x2', x2)
      line.setAttribute('y2', y2)
      line.setAttribute('stroke', color)
      line.setAttribute('stroke-width', width)
      grid.appendChild(line)
    }

    for (let n = -9; n <= 9; n++) {
      if (n === 0) continue
      const major = n % 5 === 0
      addLine(cx + n * 82.5, 147, cx + n * 164.9, 1054, major ? '#959998' : '#646766', 1)
    }

    const rows = [193.5, 248.5, 311.5, 382.5, 463.5, 556.5, 793.5, 946.5]
    rows.forEach(y => {
      const major = y === 248.5
      addLine(0, y, 1920, y, major ? '#6c6f6e' : '#646766', major ? 2 : 1)
    })

    // World axes
    addLine(0, 665.5, 1920, 665.5, '#8a4552', 1)
    addLine(cx, 147, cx, 1054, '#67948a', 1)
  </script>

</body>
</html>
